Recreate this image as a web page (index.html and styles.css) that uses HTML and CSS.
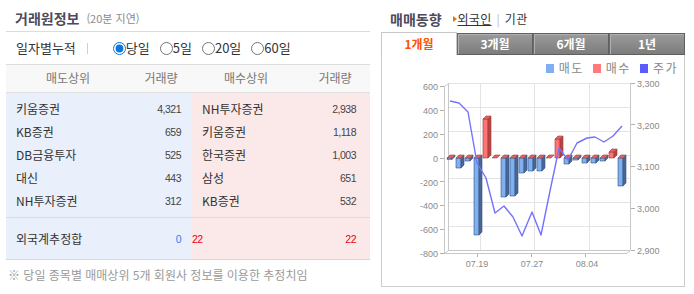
FILE: index.html
```html
<!DOCTYPE html>
<html lang="ko">
<head>
<meta charset="utf-8">
<title>거래원정보 · 매매동향</title>
<link rel="stylesheet" href="styles.css">
</head>
<body>
<div class="page">
  <section class="deal">
    <div class="head">
      <h2 class="title">거래원정보</h2><span class="sub">(20분 지연)</span>
    </div>
    <div class="filter">
      <span class="flabel">일자별누적</span><span class="fsep"></span>
      <label class="radio"><input type="radio" name="period" checked>당일</label>
      <label class="radio"><input type="radio" name="period">5일</label>
      <label class="radio"><input type="radio" name="period">20일</label>
      <label class="radio"><input type="radio" name="period">60일</label>
    </div>
    <div class="thead">
      <div class="half left"><span class="hname">매도상위</span><span class="hamt">거래량</span></div>
      <div class="half right"><span class="hname">매수상위</span><span class="hamt">거래량</span></div>
    </div>
    <div class="tbody">
      <div class="half left sell">
        <div class="row"><span class="name">키움증권</span><span class="num">4,321</span></div>
        <div class="row"><span class="name">KB증권</span><span class="num">659</span></div>
        <div class="row"><span class="name">DB금융투자</span><span class="num">525</span></div>
        <div class="row"><span class="name">대신</span><span class="num">443</span></div>
        <div class="row"><span class="name">NH투자증권</span><span class="num">312</span></div>
      </div>
      <div class="half right buy">
        <div class="row"><span class="name">NH투자증권</span><span class="num">2,938</span></div>
        <div class="row"><span class="name">키움증권</span><span class="num">1,118</span></div>
        <div class="row"><span class="name">한국증권</span><span class="num">1,003</span></div>
        <div class="row"><span class="name">삼성</span><span class="num">651</span></div>
        <div class="row"><span class="name">KB증권</span><span class="num">532</span></div>
      </div>
    </div>
    <div class="ttotal">
      <div class="half left sell">
        <div class="row"><span class="name">외국계추정합</span><span class="num blue">0</span></div>
      </div>
      <div class="half right buy">
        <div class="row"><span class="name first num red">22</span><span class="num red">22</span></div>
      </div>
    </div>
    <p class="note">※ 당일 종목별 매매상위 5개 회원사 정보를 이용한 추정치임</p>
  </section>

  <section class="trend">
    <div class="head2">
      <h2 class="title">매매동향</h2>
      <span class="arrow"></span><a class="lnk on">외국인</a><span class="bar">|</span><a class="lnk">기관</a>
    </div>
    <div class="tabs">
      <div class="tab active">1개월</div>
      <div class="tab">3개월</div>
      <div class="tab">6개월</div>
      <div class="tab">1년</div>
    </div>
    <div class="panel">
      <div class="legend">
        <span class="sw sw-sell"></span><span class="lg">매도</span>
        <span class="sw sw-buy"></span><span class="lg">매수</span>
        <span class="sw sw-price"></span><span class="lg">주가</span>
      </div>
      <svg class="chart" width="302" height="209" viewBox="382 77 302 209" xmlns="http://www.w3.org/2000/svg">
        <g stroke="#e4e4e4" stroke-width="1" shape-rendering="crispEdges">
          <line x1="448" y1="83.5" x2="630" y2="83.5"/>
          <line x1="448" y1="107.5" x2="630" y2="107.5"/>
          <line x1="448" y1="131.5" x2="630" y2="131.5"/>
          <line x1="448" y1="155.5" x2="630" y2="155.5"/>
          <line x1="448" y1="178.5" x2="630" y2="178.5"/>
          <line x1="448" y1="202.5" x2="630" y2="202.5"/>
          <line x1="448" y1="226.5" x2="630" y2="226.5"/>
          <line x1="480.5" y1="83" x2="480.5" y2="250"/>
          <line x1="534.5" y1="83" x2="534.5" y2="250"/>
          <line x1="589.5" y1="83" x2="589.5" y2="250"/>
        </g>
        <g stroke="#c8c8c8" stroke-width="1" fill="none">
          <line x1="448.5" y1="83" x2="448.5" y2="250" shape-rendering="crispEdges"/>
          <line x1="630.5" y1="83" x2="630.5" y2="250" shape-rendering="crispEdges"/>
          <line x1="448" y1="250.5" x2="630" y2="250.5" shape-rendering="crispEdges"/>
          <line x1="444.5" y1="86" x2="444.5" y2="253.5" shape-rendering="crispEdges"/>
          <line x1="444" y1="253.5" x2="627" y2="253.5" shape-rendering="crispEdges"/>
          <line x1="444.5" y1="86.5" x2="448.5" y2="83.5"/>
          <line x1="444.5" y1="253.5" x2="448.5" y2="250.5"/>
          <line x1="626.5" y1="253.5" x2="630.5" y2="250.5"/>
        </g>
        <g stroke="#b0b0b0" stroke-width="1" shape-rendering="crispEdges">
          <line x1="440" y1="86.5" x2="444" y2="86.5"/>
          <line x1="440" y1="110.5" x2="444" y2="110.5"/>
          <line x1="440" y1="134.5" x2="444" y2="134.5"/>
          <line x1="440" y1="158.5" x2="444" y2="158.5"/>
          <line x1="440" y1="181.5" x2="444" y2="181.5"/>
          <line x1="440" y1="205.5" x2="444" y2="205.5"/>
          <line x1="440" y1="229.5" x2="444" y2="229.5"/>
          <line x1="440" y1="253.5" x2="444" y2="253.5"/>
          <line x1="631" y1="83.5" x2="635" y2="83.5"/>
          <line x1="631" y1="124.5" x2="635" y2="124.5"/>
          <line x1="631" y1="166.5" x2="635" y2="166.5"/>
          <line x1="631" y1="208.5" x2="635" y2="208.5"/>
          <line x1="631" y1="250.5" x2="635" y2="250.5"/>
          <line x1="477.5" y1="254" x2="477.5" y2="257"/>
          <line x1="531.5" y1="254" x2="531.5" y2="257"/>
          <line x1="585.5" y1="254" x2="585.5" y2="257"/>
        </g>
        <g class="ax" text-anchor="end">
          <text x="438" y="90">600</text>
          <text x="438" y="114">400</text>
          <text x="438" y="137.5">200</text>
          <text x="438" y="161.5">0</text>
          <text x="438" y="185.5">-200</text>
          <text x="438" y="209">-400</text>
          <text x="438" y="233">-600</text>
          <text x="438" y="257">-800</text>
        </g>
        <g class="ax">
          <text x="637" y="87">3,300</text>
          <text x="637" y="128.5">3,200</text>
          <text x="637" y="170">3,100</text>
          <text x="637" y="212">3,000</text>
          <text x="637" y="254">2,900</text>
        </g>
        <g class="ax" text-anchor="middle">
          <text x="477" y="267">07.19</text>
          <text x="532" y="267">07.27</text>
          <text x="587" y="267">08.04</text>
        </g>
        <g stroke-width="0.6" stroke-linejoin="round">
          <rect class="bf" x="447" y="158" width="5" height="1.4"/>
          <polygon class="bs" points="452,158 455,155 455,156.4 452,159.4"/>
          <polygon class="rt" points="447,158 450,155 455,155 452,158"/>

          <rect class="bf" x="456" y="158" width="5" height="10"/>
          <polygon class="bs" points="461,158 464,155 464,165 461,168"/>
          <polygon class="rt" points="456,158 459,155 464,155 461,158"/>

          <rect class="bf" x="465" y="158" width="5" height="3"/>
          <polygon class="bs" points="470,158 473,155 473,158 470,161"/>
          <polygon class="rt" points="465,158 468,155 473,155 470,158"/>

          <rect class="bf" x="474" y="158" width="5" height="77"/>
          <polygon class="bs" points="479,158 482,155 482,232 479,235"/>
          <polygon class="rt" points="474,158 477,155 482,155 479,158"/>

          <rect class="rf" x="483" y="119" width="5" height="39"/>
          <polygon class="rs" points="488,119 491,116 491,155 488,158"/>
          <polygon class="rt" points="483,119 486,116 491,116 488,119"/>

          <polygon class="rt" points="492,158 495,155 500,155 497,158"/>

          <rect class="bf" x="501" y="158" width="5" height="39"/>
          <polygon class="bs" points="506,158 509,155 509,194 506,197"/>
          <polygon class="rt" points="501,158 504,155 509,155 506,158"/>

          <rect class="bf" x="510" y="158" width="5" height="38"/>
          <polygon class="bs" points="515,158 518,155 518,193 515,196"/>
          <polygon class="rt" points="510,158 513,155 518,155 515,158"/>

          <rect class="bf" x="519" y="158" width="5" height="15"/>
          <polygon class="bs" points="524,158 527,155 527,170 524,173"/>
          <polygon class="rt" points="519,158 522,155 527,155 524,158"/>

          <rect class="bf" x="528" y="158" width="5" height="13"/>
          <polygon class="bs" points="533,158 536,155 536,168 533,171"/>
          <polygon class="rt" points="528,158 531,155 536,155 533,158"/>

          <rect class="bf" x="537" y="158" width="5" height="13"/>
          <polygon class="bs" points="542,158 545,155 545,168 542,171"/>
          <polygon class="rt" points="537,158 540,155 545,155 542,158"/>

          <polygon class="rt" points="546,158 549,155 554,155 551,158"/>

          <rect class="rf" x="555" y="139" width="5" height="19"/>
          <polygon class="rs" points="560,139 563,136 563,155 560,158"/>
          <polygon class="rt" points="555,139 558,136 563,136 560,139"/>

          <rect class="bf" x="564" y="158" width="5" height="6"/>
          <polygon class="bs" points="569,158 572,155 572,161 569,164"/>
          <polygon class="rt" points="564,158 567,155 572,155 569,158"/>

          <rect class="bf" x="573" y="158" width="5" height="2"/>
          <polygon class="bs" points="578,158 581,155 581,157 578,160"/>
          <polygon class="rt" points="573,158 576,155 581,155 578,158"/>

          <rect class="bf" x="582" y="158" width="5" height="5"/>
          <polygon class="bs" points="587,158 590,155 590,160 587,163"/>
          <polygon class="rt" points="582,158 585,155 590,155 587,158"/>

          <rect class="bf" x="591" y="158" width="5" height="5"/>
          <polygon class="bs" points="596,158 599,155 599,160 596,163"/>
          <polygon class="rt" points="591,158 594,155 599,155 596,158"/>

          <rect class="bf" x="600" y="158" width="5" height="3"/>
          <polygon class="bs" points="605,158 608,155 608,158 605,161"/>
          <polygon class="rt" points="600,158 603,155 608,155 605,158"/>

          <rect class="rf" x="609" y="152" width="5" height="6"/>
          <polygon class="rs" points="614,152 617,149 617,155 614,158"/>
          <polygon class="rt" points="609,152 612,149 617,149 614,152"/>

          <rect class="bf" x="618" y="158" width="5" height="28"/>
          <polygon class="bs" points="623,158 626,155 626,183 623,186"/>
          <polygon class="rt" points="618,158 621,155 626,155 623,158"/>
        </g>
        <polyline class="price" points="450,101 459,103 468,112 477,163 486,178 495,213 504,206 513,217 522,236 532,212 541,235 550,191 559,148 568,160 577,143 587,138 595,137 604,142 613,136 622,126"/>
      </svg>
    </div>
  </section>
</div>
</body>
</html>
```
FILE: styles.css
```css
* { box-sizing: border-box; margin: 0; padding: 0; }
body {
  margin: 0;
  background: #fff;
  font-family: "Noto Sans CJK KR", "Liberation Sans", sans-serif;
  color: #333;
}
.page {
  display: flex;
  align-items: flex-start;
  gap: 11px;
  padding-left: 6px;
  width: 694px;
  height: 294px;
  overflow: hidden;
}

/* ---------- left panel ---------- */
.deal { width: 364px; }
.head {
  height: 32px;
  padding: 5px 0 0 9px;
  border-bottom: 1px solid #dcdcdc;
  display: flex;
  align-items: center;
}
.title {
  font-size: 14px;
  font-weight: bold;
  line-height: 16px;
  color: #4d4a5c;
}
.sub {
  font-size: 11px;
  line-height: 14px;
  color: #8a8a8a;
  margin-left: 7px;
}
.filter {
  height: 33px;
  padding-left: 10px;
  border-bottom: 1px solid #dcdcdc;
  display: flex;
  align-items: center;
  font-size: 13px;
  line-height: 16px;
  color: #333;
}
.fsep {
  width: 1px;
  height: 11px;
  background: #d0d0d0;
  margin: 0 25px 0 11px;
}
.radio {
  display: flex;
  align-items: center;
  margin-right: 10px;
}
.radio input {
  width: 13px;
  height: 13px;
  margin: 0;
  accent-color: #0a78e0;
}
.thead {
  height: 28px;
  padding-top: 5px;
  background: #f8f8f8;
  border-bottom: 1px solid #e2e2e2;
  display: flex;
  font-size: 12px;
  line-height: 16px;
  color: #777;
}
.half { display: flex; }
.half.left { width: 186px; }
.half.right { width: 178px; }
.thead .left .hname { width: 124px; text-align: center; }
.thead .left .hamt { width: 62px; text-align: center; }
.thead .right .hname { width: 108px; text-align: center; }
.thead .right .hamt { width: 70px; text-align: center; }

.tbody { display: flex; }
.tbody .half {
  flex-direction: column;
  padding: 4px 0 5px;
}
.sell { background: #e9f0fb; }
.buy { background: #fbe9e9; }
.row {
  height: 23px;
  display: flex;
  align-items: center;
  font-size: 12px;
  color: #333;
}
.left .row { padding: 0 11px 0 10px; }
.right .row { padding: 0 14px 0 10px; }
.name { flex: 1; line-height: 16px; }
.num {
  font-family: "Liberation Sans", sans-serif;
  font-size: 10.5px;
  letter-spacing: -0.5px;
  line-height: 16px;
  color: #444;
}
.right .row .first { margin-left: -10px; }
.blue { color: #2f7cf0; }
.red { color: #f0000a; }
.ttotal {
  display: flex;
  border-top: 1px solid #dcdcdc;
  border-bottom: 1px solid #d8d8d8;
}
.ttotal .half {
  height: 41px;
  flex-direction: column;
  justify-content: center;
}
.ttotal .row { font-size: 12px; }
.note {
  margin-top: 8px;
  padding-left: 2px;
  font-size: 12px;
  line-height: 14px;
  color: #9a9a9a;
  white-space: nowrap;
}

/* ---------- right panel ---------- */
.trend { width: 304px; }
.head2 {
  height: 32px;
  padding: 6px 0 0 9px;
  display: flex;
  align-items: center;
}
.arrow {
  width: 0;
  height: 0;
  border-top: 3.5px solid transparent;
  border-bottom: 3.5px solid transparent;
  border-left: 4px solid #ff6a00;
  margin: 0 1px 0 11px;
}
.lnk {
  font-size: 12px;
  line-height: 16px;
  color: #333;
  letter-spacing: 0.3px;
}
.lnk.on { text-decoration: underline; }
.bar {
  font-size: 12px;
  line-height: 16px;
  color: #bbb;
  margin: 0 5px;
}
.tabs {
  display: flex;
  height: 23px;
}
.tab {
  width: 76px;
  height: 22px;
  margin-top: 1px;
  text-align: center;
  font-size: 12px;
  font-weight: bold;
  line-height: 20px;
  color: #fff;
  background: linear-gradient(#9a9a9a, #7c7c7c);
  border: 1px solid #5f5f5f;
  border-left-color: #6a6a6a;
  box-shadow: inset 1px 1px 0 #b0b0b0;
}
.tab.active {
  height: 23px;
  margin-top: 0;
  line-height: 22px;
  color: #ff5200;
  background: #fff;
  border: 1px solid #c8c8c8;
  border-bottom: none;
  box-shadow: none;
}
.panel {
  height: 232px;
  border: 1px solid #cccccc;
  border-top: none;
}
.legend {
  height: 22px;
  padding: 6px 6px 0 0;
  display: flex;
  justify-content: flex-end;
  align-items: center;
  height: 22px;
}
.legend { align-items: flex-start; }
.sw {
  width: 8px;
  height: 9px;
  margin: 3px 5px 0 9px;
}
.sw-sell { background: #7fb1f2; }
.sw-buy { background: #ff7b7b; }
.sw-price { background: #5b5bff; }
.lg {
  font-size: 12px;
  line-height: 14px;
  color: #888;
  letter-spacing: 1.5px;
}
.chart { display: block; }
.ax {
  font-family: "Liberation Sans", sans-serif;
  font-size: 9px;
  fill: #8a8a8a;
}
.bf { fill: #7fb0f0; stroke: #34537f; }
.bs { fill: #4a6794; stroke: #34537f; }
.rf { fill: #ff7474; stroke: #9a3535; }
.rs { fill: #b84545; stroke: #9a3535; }
.rt { fill: #e36262; stroke: #a43c3c; }
.price {
  fill: none;
  stroke: #7373ff;
  stroke-width: 1.4;
  stroke-linejoin: round;
}
```
